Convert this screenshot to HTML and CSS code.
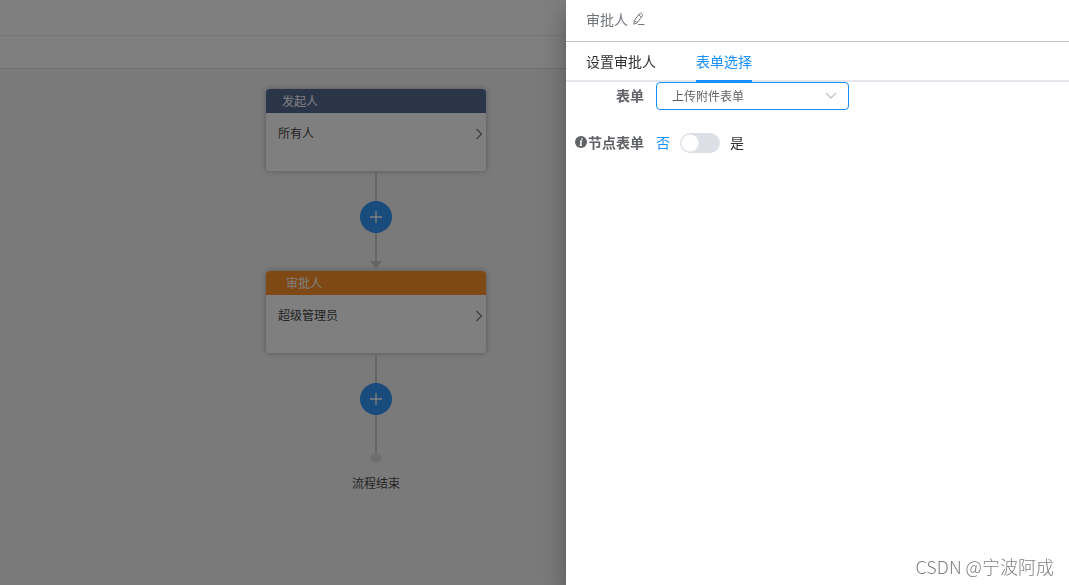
FILE: index.html
```
<!DOCTYPE html>
<html lang="zh-CN">
<head>
<meta charset="utf-8">
<title>审批流程</title>
<link rel="stylesheet" href="styles.css">
</head>
<body>
<div class="page">
  <header class="topbar"></header>
  <div class="toolbar"></div>
  <main class="canvas">
    <div class="flow">
      <section class="node">
        <h2 class="node-head start">发起人</h2>
        <div class="node-body"><span>所有人</span>
          <svg class="arrow" viewBox="0 0 8 12"><path d="M1.500 1l5 5-5 5"/></svg>
        </div>
      </section>
      <div class="link to-node">
        <button class="add" aria-label="添加节点"><svg viewBox="0 0 12 12"><path d="M6 0v12M0 6h12"/></svg></button>
      </div>
      <section class="node">
        <h2 class="node-head approver">审批人</h2>
        <div class="node-body"><span>超级管理员</span>
          <svg class="arrow" viewBox="0 0 8 12"><path d="M1.500 1l5 5-5 5"/></svg>
        </div>
      </section>
      <div class="link">
        <button class="add" aria-label="添加节点"><svg viewBox="0 0 12 12"><path d="M6 0v12M0 6h12"/></svg></button>
      </div>
      <div class="end-dot"></div>
      <p class="end-text">流程结束</p>
    </div>
  </main>
</div>
<div class="mask"></div>
<aside class="drawer">
  <header class="drawer-head">
    <span>审批人</span>
    <svg class="edit" viewBox="0 0 14 14"><path d="M2.300 8.600L7.600 1.500q.5-.7 1.200-.2l1.500 1.100q.7.5.2 1.200L5.200 10.700 1.800 12.200zM6.600 2.900l2.700 2M2.300 8.600l2.900 2.100M6 12.500h6.500"/></svg>
  </header>
  <nav class="tabs">
    <button class="tab">设置审批人</button>
    <button class="tab active">表单选择</button>
  </nav>
  <form class="form">
    <div class="row">
      <label class="label" for="form-select">表单</label>
      <div class="select-box">
        <select class="select" id="form-select"><option>上传附件表单</option></select>
        <svg class="chevron" viewBox="0 0 12 8"><path d="M1 1l5 5 5-5"/></svg>
      </div>
    </div>
    <div class="row">
      <label class="label" for="node-form">
        <svg class="info" viewBox="0 0 12 12"><circle cx="6" cy="6" r="6"/><path d="M6.900 2.300v1.500M5 5.300h1.300l-.8 3.900h1.300"/></svg>节点表单</label>
      <div class="switch-box">
        <span class="off">否</span>
        <input class="switch" id="node-form" type="checkbox" role="switch">
        <span>是</span>
      </div>
    </div>
  </form>
</aside>
<div class="watermark">CSDN @宁波阿成</div>
</body>
</html>
```
FILE: styles.css
```
* { box-sizing: border-box; }
body {
  margin: 0;
  font-family: "Noto Sans CJK SC", sans-serif;
  font-size: 14px;
  line-height: 20px;
  color: #303133;
}
button, select { font: inherit; color: inherit; }
button { border: 0; padding: 0; background: none; cursor: pointer; }
svg { fill: none; stroke: currentColor; flex: none; }

.page { min-height: 100vh; display: flex; flex-direction: column; background: #f5f5f7; }
.topbar { height: 36px; background: #fff; border-bottom: 1px solid #f0f0f0; }
.toolbar { height: 33px; background: #fff; border-bottom: 1px solid #dcdce8; }
.canvas { flex: 1; padding: 20px 0 0 266px; }
.flow { width: 220px; display: flex; flex-direction: column; align-items: center; font-size: 12px; color: #484848; }
.node { width: 100%; background: #fff; border-radius: 4px; overflow: hidden; box-shadow: 0 0 6px rgba(0, 0, 0, .3); }
.node-head { margin: 0; padding: 0 16px; font-size: 12px; font-weight: 400; line-height: 24px; color: #fff; }
.start { background: #576a95; }
.approver { background: #ff932a; padding-left: 20px; }
.node-body { height: 58px; padding: 10px 3px 0 12px; display: flex; justify-content: space-between; align-items: flex-start; }
.arrow { width: 8px; height: 12px; margin-top: 5px; color: #808080; stroke-width: 1.3; }
.link {
  position: relative;
  width: 100%;
  height: 100px;
  padding-top: 30px;
  display: flex;
  justify-content: center;
  align-items: flex-start;
  background: linear-gradient(#cacaca, #cacaca) center / 2px 100% no-repeat;
}
.to-node { background-size: 2px 92px; background-position: center top; }
.to-node::after {
  content: "";
  position: absolute;
  bottom: 2px;
  border: 6px solid transparent;
  border-top: 8px solid #cacaca;
  border-bottom: 0;
}
.add {
  width: 32px;
  height: 32px;
  border-radius: 50%;
  display: flex;
  align-items: center;
  justify-content: center;
  background: #3296fa;
  color: #fff;
}
.add svg { width: 12px; height: 12px; stroke-width: 1.3; }
.end-dot { width: 10px; height: 10px; border-radius: 50%; background: #dbdcdc; }
.end-text { margin: 10px 0 0; }

.mask { position: fixed; inset: 0; background: rgba(0, 0, 0, .5); }
.drawer {
  position: fixed;
  top: 0;
  right: 0;
  bottom: 0;
  width: 503px;
  max-width: 100%;
  background: #fff;
  box-shadow: 0 8px 10px -5px rgba(0, 0, 0, .2), 0 16px 24px 2px rgba(0, 0, 0, .14), 0 6px 30px 5px rgba(0, 0, 0, .12);
}
.drawer-head {
  height: 42px;
  padding: 0 20px 4px;
  display: flex;
  align-items: center;
  gap: 4px;
  color: #72767b;
  border-bottom: 1px solid #c0c4cc;
}
.edit { width: 14px; height: 14px; }
.tabs { height: 40px; padding: 0 20px; display: flex; gap: 40px; border-bottom: 2px solid #e4e7ed; }
.tab { margin-bottom: -2px; border-bottom: 2px solid transparent; }
.active { color: #1890ff; border-color: #1890ff; }
.form { display: flex; flex-direction: column; gap: 18px; }
.row { display: flex; align-items: center; min-height: 28px; }
.label {
  width: 90px;
  padding: 0 12px 2px 0;
  display: flex;
  align-items: center;
  justify-content: flex-end;
  font-weight: 700;
  color: #606266;
}
.info { width: 12px; height: 12px; margin-right: 1px; fill: #606266; stroke: none; }
.info path { fill: none; stroke: #fff; stroke-width: 1.4; }
.select-box { position: relative; width: 193px; }
.select {
  display: block;
  width: 100%;
  height: 28px;
  padding: 0 30px 0 15px;
  appearance: none;
  border: 1px solid #1890ff;
  border-radius: 4px;
  background: #fff;
  font-size: 12px;
  color: #606266;
}
.chevron { position: absolute; right: 12px; top: 10px; width: 12px; height: 8px; color: #c0c4cc; stroke-width: 1.3; pointer-events: none; }
.switch-box { display: flex; align-items: center; gap: 10px; min-height: 30px; }
.switch-box span { padding-bottom: 2px; }
.off { color: #1890ff; }
.switch {
  appearance: none;
  width: 40px;
  height: 20px;
  margin: 0;
  border-radius: 10px;
  background: radial-gradient(circle at 10px 10px, #fff 8px, #dcdfe6 9px);
}
.watermark { position: fixed; right: 15px; bottom: 6px; font-size: 18px; line-height: 26px; font-weight: 300; color: #808080; }
```
